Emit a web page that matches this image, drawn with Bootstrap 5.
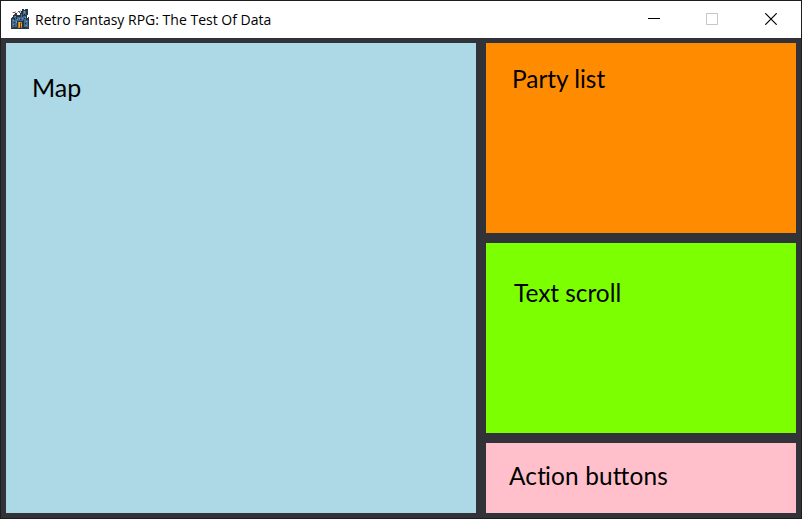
<!DOCTYPE html>
<html lang="en">
<head>
<meta charset="utf-8">
<title>Retro Fantasy RPG: The Test Of Data</title>
<link href="https://cdn.jsdelivr.net/npm/bootstrap@5.3.0/dist/css/bootstrap.min.css" rel="stylesheet">
<style>
body{font-family:Lato,sans-serif;color:#000;background:#323338}
.app-window{width:802px;height:519px;border:1px solid #1f1c20}
.titlebar{height:37px;padding:0 0 1px 10px}
.app-icon{width:18px;height:20px}
.title-text{font:15px/20px "Open Sans",sans-serif;margin-left:6px;width:236px;transform-origin:0 50%;transform:scaleX(.934)}
.win-btn{width:12px;height:12px;margin-right:47px}
.win-btn:first-child{margin-right:46px}
.win-btn:last-child{margin-right:24px}
.workspace{padding:5px;gap:10px}
.side{width:310px;gap:10px}
.map-panel{width:470px;height:470px;background:#add8e6;padding:29px 0 0 26px}
.party-panel{height:190px;background:#ff8c00;padding:21px 0 0 26px}
.scroll-panel{height:190px;background:#7cff00;padding:35px 0 0 28px}
.action-panel{height:70px;background:#ffc0cb;padding:18px 0 0 23px}
.label{font-size:24.4px;line-height:30px}
.map-panel .label{font-size:25px}
.action-panel .label{letter-spacing:.15px}
.action-panel .tie{letter-spacing:-.9px}
</style>
<script src="https://cdn.jsdelivr.net/npm/bootstrap@5.3.0/dist/js/bootstrap.bundle.min.js"></script>
</head>
<body class="overflow-hidden">
<div class="app-window d-flex flex-column">
  <header class="titlebar d-flex align-items-center bg-white flex-shrink-0">
    <svg class="app-icon flex-shrink-0" viewBox="0 0 18 20" shape-rendering="crispEdges">
      <path fill="#253546" d="M4 4h2v2h3V4h1V2h1V0h2v1h1V0h3v6h-1v3h1V8h1v12H0V9h1V8h1V6h2z"/>
      <path fill="#42698f" d="M12 2h3v4h-3zM3 7h2v3H3zM1 10h5v4H1zM6 8h6v4H6zM12 7h3v4h-3zM13 11h4v3h-4zM1 14h5v4H1zM13 14h4v4h-4zM10 5h1v3h-1z"/>
      <path fill="#6e9bbb" d="M13 2h1v2h-1zM4 7h1v1H4zM2 11h1v1H2zM8 9h1v1H8zM14 8h1v1h-1zM6 10h1v1H6zM15 12h1v1h-1zM2 15h1v1H2zM15 16h1v1h-1zM11 9h1v1h-1zM5 12h1v2H5z"/>
      <path fill="#1b2939" d="M3 9h1v2H3zM9 10h1v1H9zM13 9h1v1h-1zM3 13h1v1H3zM3 16h1v1H3zM14 14h1v1h-1zM13 5h1v1h-1zM7 7h1v1H7zM15 10h1v1h-1z"/>
      <path fill="#a54850" d="M2 3h2v1H2zM3 5h1v1H3zM7 2h2v1H7zM8 3h1v1H8z"/>
      <path fill="#c9c0c5" d="M4 2h1v2H4zM9 1h1v3H9zM1 3h1v1H1zM6 3h1v1H6z"/>
      <path fill="#ce7c20" d="M7 13h4v6H7z"/>
      <path fill="#efad34" d="M8 13h1v5H8zM10 15h1v2h-1z"/>
      <path fill="#553e28" d="M9 14h1v5H9zM6 18h1v1H6zM0 18h2v1H0zM16 18h2v1h-2z"/>
    </svg>
    <span class="title-text text-nowrap">Retro Fantasy RPG: The Test Of Data</span>
    <div class="d-flex ms-auto">
      <svg class="win-btn" viewBox="0 0 12 12"><path d="M0 5.5h12" stroke="#000"/></svg>
      <svg class="win-btn" viewBox="0 0 12 12"><path d="M.5.5h11v11H.5z" fill="none" stroke="#c5c5ca"/></svg>
      <svg class="win-btn" viewBox="0 0 12 12"><path d="M.3.3l11.4 11.4M11.7.3L.3 11.7" stroke="#000" stroke-width="1.2"/></svg>
    </div>
  </header>
  <main class="workspace d-flex">
    <section class="map-panel"><div class="label">Map</div></section>
    <aside class="side d-flex flex-column">
      <section class="party-panel"><div class="label">Party list</div></section>
      <section class="scroll-panel"><div class="label">Text scroll</div></section>
      <section class="action-panel"><div class="label">Ac<span class="tie">t</span>ion bu<span class="tie">t</span>tons</div></section>
    </aside>
  </main>
</div>
</body>
</html>
